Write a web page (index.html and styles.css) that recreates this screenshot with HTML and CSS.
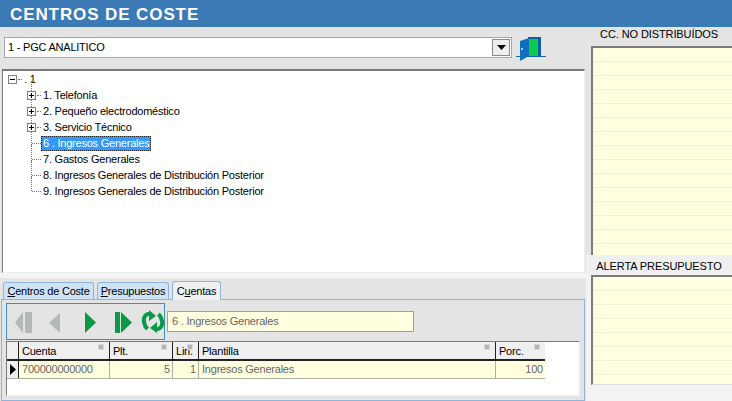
FILE: index.html
```html
<!DOCTYPE html>
<html lang="es">
<head>
<meta charset="utf-8">
<title>Centros de coste</title>
<link rel="stylesheet" href="styles.css">
</head>
<body>
<div class="page">
  <header class="title">CENTROS DE COSTE</header>
  <div class="main">
    <div class="left">
      <div class="toolbar">
        <div class="combo">
          <span class="combo-text">1 - PGC ANALITICO</span>
          <span class="combo-btn"><svg width="9" height="5" viewBox="0 0 9 5"><path d="M0 0h9L4.500 5z" fill="#000"/></svg></span>
        </div>
        <svg class="door" width="32" height="26" viewBox="0 0 32 26">
          <path d="M0 19.500h30" stroke="#1668b0" fill="none"/>
          <path d="M12 0h13v20H12z" fill="#0d5fa8"/>
          <rect x="13" y="2" width="9" height="17" fill="#0bcb4e"/>
          <path d="M4 4 13 1v18l-9 5z" fill="#1070c0"/>
          <rect x="5" y="11" width="2" height="2" fill="#9fd0f0"/>
        </svg>
      </div>
      <div class="tree">
        <div class="node root"><span class="box minus"></span><span class="dots"></span><span class="lbl">. 1</span></div>
        <div class="node l1 line"><span class="box plus"></span><span class="dots"></span><span class="lbl">1. Telefonía</span></div>
        <div class="node l1 line"><span class="box plus"></span><span class="dots"></span><span class="lbl">2. Pequeño electrodoméstico</span></div>
        <div class="node l1 line"><span class="box plus"></span><span class="dots"></span><span class="lbl">3. Servicio Técnico</span></div>
        <div class="node l1 line"><span class="nobox"></span><span class="dots long"></span><span class="lbl sel">6 . Ingresos Generales</span></div>
        <div class="node l1 line"><span class="nobox"></span><span class="dots long"></span><span class="lbl">7. Gastos Generales</span></div>
        <div class="node l1 line"><span class="nobox"></span><span class="dots long"></span><span class="lbl">8. Ingresos Generales de Distribución Posterior</span></div>
        <div class="node l1 end"><span class="nobox"></span><span class="dots long"></span><span class="lbl">9. Ingresos Generales de Distribución Posterior</span></div>
      </div>
      <div class="strip"></div>
      <div class="tabs">
        <span class="tab t1"><u>C</u>entros de Coste</span>
        <span class="tab t2"><u>P</u>resupuestos</span>
        <span class="tab t3 active">C<u>u</u>entas</span>
      </div>
      <div class="tabpanel">
        <div class="navrow">
          <div class="nav">
            <svg width="157" height="35" viewBox="0 0 157 35">
              <g fill="#b4b9b8"><path d="M18 8h7v21h-7zM16 8v21L8 18.500z"/><path d="M53 9v20L42 19z"/></g>
              <g fill="#0a9a45"><path d="M78 8v21l11-10.500z"/><path d="M108 8h5v21h-5zM114 8v21l11-10.500z"/></g>
              <g fill="none" stroke="#0a9a45" stroke-width="4"><path d="M144 10c-5-1-8 3-7 8 .3 3 1.500 5 3.500 7"/><path d="M148 25c5 1 8-3 7-8-.3-3-1.500-5-3.500-7"/></g>
              <g fill="#0a9a45"><path d="M142 6l7 6-7 5zM150 29l-7-5 7-6z"/></g>
            </svg>
          </div>
          <div class="field">6 . Ingresos Generales</div>
        </div>
        <div class="grid">
          <div class="row head">
            <span class="ind"></span>
            <span class="c c1">Cuenta<i></i></span>
            <span class="c c2">Plt.<i></i></span>
            <span class="c c3">Lin.<i></i></span>
            <span class="c c4">Plantilla<i></i></span>
            <span class="c c5">Porc.<i></i></span>
          </div>
          <div class="row data">
            <span class="ind"><svg width="6" height="11" viewBox="0 0 6 11"><path d="M0 0l6 5.500L0 11z" fill="#000"/></svg></span>
            <span class="c c1">700000000000</span>
            <span class="c c2 num">5</span>
            <span class="c c3 num">1</span>
            <span class="c c4">Ingresos Generales</span>
            <span class="c c5 num">100</span>
          </div>
        </div>
      </div>
    </div>
    <aside class="right">
      <div class="cap cap1">CC. NO DISTRIBUÍDOS</div>
      <div class="memo memo1"></div>
      <div class="cap cap2">ALERTA PRESUPUESTO</div>
      <div class="memo memo2"></div>
    </aside>
  </div>
</div>
</body>
</html>
```
FILE: styles.css
```css
* { box-sizing: border-box; }
html, body { margin: 0; padding: 0; }
body { font: 11px/13px "Liberation Sans", Arial, sans-serif; letter-spacing: -.22px; color: #000; background: #f3f3f3; overflow: hidden; }
.page { width: 732px; height: 401px; display: flex; flex-direction: column; }
.title { height: 27px; background: #3c7ab5; color: #fff; font: bold 17px/30px "Liberation Sans", Arial, sans-serif; padding-left: 10px; letter-spacing: .9px; flex: none; }
.main { flex: 1; display: flex; min-height: 0; }
.left { width: 586px; flex: none; background: #e4e4e4; display: flex; flex-direction: column; padding: 0 1px 0 2px; }
.toolbar { height: 42px; flex: none; display: flex; align-items: flex-start; padding: 10px 0 0 2px; }
.combo { width: 508px; height: 21px; background: #fff; border: 1px solid #a8a8a8; display: flex; align-items: center; justify-content: space-between; padding: 0 1px 0 3px; }
.combo-btn { width: 18px; height: 17px; background: #eee; border: 1px solid #8a8a8a; display: flex; align-items: center; justify-content: center; }
.door { margin: 0 0 0 4px; }
.tree { height: 204px; flex: none; background: #fff; border: 1px solid #eee; border-top: 2px solid #7b7b7b; border-left: 1px solid #7b7b7b; padding: 0 0 0 5px; }
.node { height: 16px; display: flex; align-items: center; }
.node.l1 { padding-left: 19px; position: relative; }
.line::before { content: ""; position: absolute; left: 23px; top: -6px; height: 22px; border-left: 1px dotted #777; }
.end::before { content: ""; position: absolute; left: 23px; top: -6px; height: 14px; border-left: 1px dotted #777; }
.box { width: 9px; height: 9px; border: 1px solid #808080; background: #fff; position: relative; flex: none; z-index: 1; }
.box::before { content: ""; position: absolute; left: 1px; top: 3px; width: 5px; height: 1px; background: #000; }
.plus::after { content: ""; position: absolute; left: 3px; top: 1px; width: 1px; height: 5px; background: #000; }
.nobox { width: 9px; flex: none; }
.dots { width: 4px; margin: 0 0 0 1px; border-top: 1px dotted #777; flex: none; }
.dots.long { width: 9px; margin: 0 0 0 -4px; }
.lbl { padding: 0 2px; line-height: 15px; white-space: nowrap; }
.sel { background: #3399ff; color: #fff; outline: 1px dotted #222; outline-offset: -1px; }
.strip { height: 5px; flex: none; background: #f3f3f3; margin: 0 -1px 0 -2px; }
.tabs { height: 21px; flex: none; padding-left: 1px; display: flex; align-items: flex-end; gap: 3px; position: relative; z-index: 1; }
.tab { height: 17px; padding: 2px 0 0; text-align: center; background: #cfe3f6; border: 1px solid #8fb3d9; border-bottom: none; border-radius: 3px 3px 0 0; white-space: nowrap; }
.t1 { width: 91px; }
.t2 { width: 72px; }
.t3 { width: 49px; }
.tab.active { height: 19px; background: #f0f0f0; margin-bottom: -1px; padding-top: 3px; }
.tabpanel { height: 102px; flex: none; border: 1px solid #8fb3d9; padding: 3px 4px 0 4px; margin-left: -1px; background: #e4e4e4; }
.navrow { display: flex; height: 38px; align-items: flex-start; gap: 2px; }
.nav { width: 159px; height: 37px; border: 1px solid #3c90c0; flex: none; }
.nav svg { display: block; }
.field { width: 247px; height: 21px; margin-top: 8px; background: #ffffe0; border: 1px solid #a0a0a0; color: #666; padding: 3px 0 0 4px; }
.grid { height: 55px; background: #fff; border: 1px solid #eee; border-top: 1px solid #7b7b7b; border-left: 1px solid #7b7b7b; }
.row { display: flex; width: 538px; }
.row.head { background: #efefef; border-bottom: 2px solid #222; height: 19px; }
.row.data { background: #ffffe0; color: #666; border-bottom: 1px solid #b0b0a0; height: 18px; }
.ind { width: 12px; flex: none; display: flex; align-items: center; justify-content: center; background: #efefef; border-right: 1px solid #222; }
.c { position: relative; padding: 1px 2px 0 3px; border-right: 1px solid #b0b0a0; white-space: nowrap; line-height: 15px; }
.head .c { border-right: 1px solid #222; color: #000; padding-top: 2px; }
.head .c i { position: absolute; top: 2px; right: 5px; width: 6px; height: 6px; background: #b4b4b4; border: 1px solid #d8d8d8; }
.num { text-align: right; }
.c1 { width: 91px; }
.c2 { width: 63px; }
.c3 { width: 26px; }
.c4 { width: 297px; }
.c5 { width: 49px; border-right: none !important; }
.right { flex: 1; display: flex; flex-direction: column; padding-left: 5px; background: linear-gradient(#e4e4e4 0 231px, #f3f3f3 231px); }
.cap { text-align: center; white-space: nowrap; margin-left: -5px; letter-spacing: -.1px; }
.cap1 { background: #e4e4e4; height: 19px; padding-top: 1px; }
.cap2 { background: #f0f0f0; height: 20px; padding-top: 5px; }
.memo { background: repeating-linear-gradient(#ffffe0 0 13px, #f3f0dc 13px 14px); border-left: 2px solid #7b7b7b; border-top: 2px solid #7b7b7b; }
.memo1 { height: 209px; }
.memo2 { height: 110px; border-bottom: 1px solid #ddd; }
```
